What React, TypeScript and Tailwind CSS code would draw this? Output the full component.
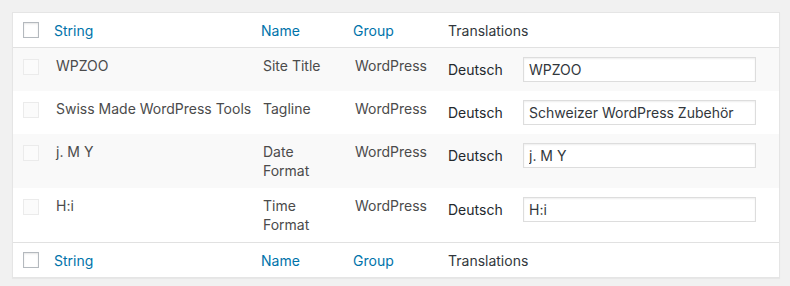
import React from "react";

type Row = {
    id: number;
    string: string;
    name: string;
    group: string;
    translation: string;
};

const rows: Array<Row> = [
    { id: 1, string: "WPZOO", name: "Site Title", group: "WordPress", translation: "WPZOO" },
    { id: 2, string: "Swiss Made WordPress Tools", name: "Tagline", group: "WordPress", translation: "Schweizer WordPress Zubehör" },
    { id: 3, string: "j. M Y", name: "Date Format", group: "WordPress", translation: "j. M Y" },
    { id: 4, string: "H:i", name: "Time Format", group: "WordPress", translation: "H:i" },
];

const cols = "grid grid-cols-[31px_207px_92px_95px_1fr]";

const HeadRow = ({ bottom }: { bottom?: boolean }) => (
    <div className={`${cols} h-[35px] items-center ${bottom ? "border-t border-[#e1e1e1]" : "border-b border-[#e1e1e1]"}`}>
        <div className="flex justify-end pr-[5px]">
            <span className="block w-4 h-4 border border-[#b4b9be] bg-white shadow-[inset_0_1px_2px_rgba(0,0,0,0.1)]" />
        </div>
        <a className="px-[10px] text-[#0073aa]">String</a>
        <a className="px-[10px] text-[#0073aa]">Name</a>
        <a className="px-[10px] text-[#0073aa]">Group</a>
        <span className="px-[10px] text-[#32373c]">Translations</span>
    </div>
);

export default function App() {
    return (
        <div className="min-h-[286px] bg-[#f1f1f1] pt-3 px-3 text-[14px] leading-[19px]" style={{ fontFamily: "Inter, 'Liberation Sans', sans-serif" }}>
            <div className="w-[768px] bg-white border border-[#e5e5e5] shadow-[0_1px_1px_rgba(0,0,0,0.04)]">
                <HeadRow />
                {rows.map((row, index) => (
                    <div key={row.id} className={`${cols} ${index % 2 === 0 ? "bg-[#f9f9f9]" : "bg-white"} text-[#4b4b4b]`}>
                        <div className="flex justify-end pr-[5px] pt-[11px]">
                            <span className="block w-4 h-4 border border-[#ebebeb] bg-[#fbfbfb]" />
                        </div>
                        <div className="pl-[12px] py-2 whitespace-nowrap">{row.string}</div>
                        <div className="pl-[12px] pr-[10px] py-2">{row.name}</div>
                        <div className="pl-[12px] pr-[10px] py-2">{row.group}</div>
                        <div className="flex items-start pl-[10px] py-[9px]">
                            <span className="w-[75px] pt-[3px] text-[#23282d]">Deutsch</span>
                            <input
                                type="text"
                                defaultValue={row.translation}
                                className="w-[233px] h-[25px] px-[5px] border border-[#ddd] bg-white text-[#32373c] shadow-[inset_0_1px_2px_rgba(0,0,0,0.07)] outline-none"
                            />
                        </div>
                    </div>
                ))}
                <HeadRow bottom />
            </div>
        </div>
    );
}
